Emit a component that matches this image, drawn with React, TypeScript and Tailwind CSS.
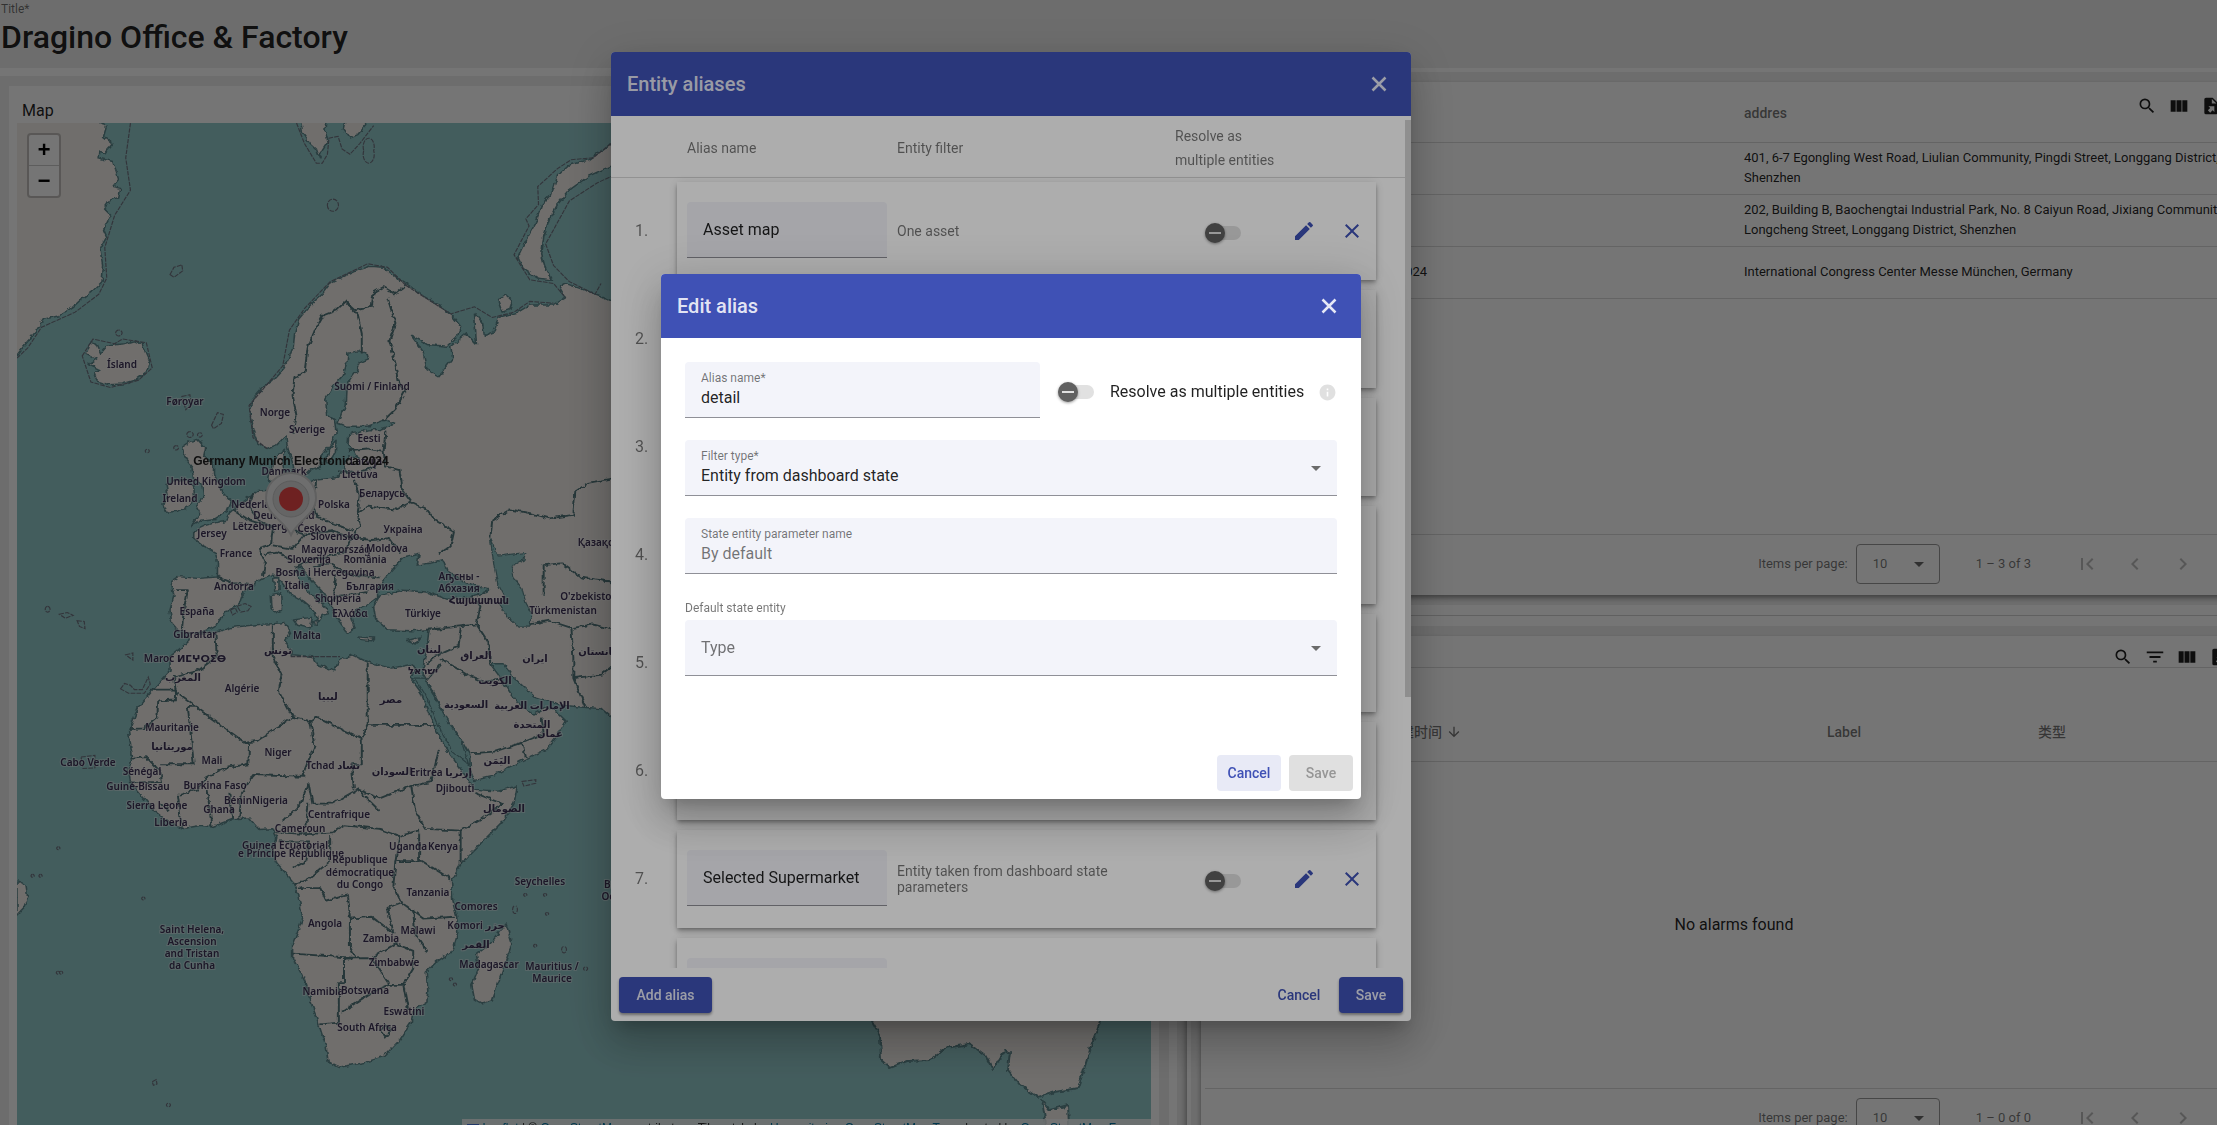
import React from "react";
import {
  MdArrowDownward,
  MdChevronLeft,
  MdChevronRight,
  MdClose,
  MdEdit,
  MdFilterList,
  MdFirstPage,
  MdInfo,
  MdLastPage,
  MdSearch,
} from "react-icons/md";

interface Alias {
  name: string;
  filter: string;
}

const aliases: Alias[] = [
  { name: "Asset map", filter: "One asset" },
  { name: "", filter: "" },
  { name: "", filter: "" },
  { name: "", filter: "" },
  { name: "", filter: "" },
  { name: "", filter: "" },
  {
    name: "Selected Supermarket",
    filter: "Entity taken from dashboard state parameters",
  },
  { name: "", filter: "" },
];

const places = [
  { name: "", address: "401, 6-7 Egongling West Road, Liulian Community, Pingdi Street, Longgang District, Shenzhen" },
  { name: "", address: "202, Building B, Baochengtai Industrial Park, No. 8 Caiyun Road, Jixiang Community, Longcheng Street, Longgang District, Shenzhen" },
  {
    name: "Germany Munich Electronica 2024",
    address: "International Congress Center Messe München, Germany",
  },
];

// Map units to pixels
const SX = 0.3954;
const SY = 0.3588;
const OX = 17;
const OY = 123;

const land = [
  // Greenland
  "M0 300 L260 300 255 345 270 350 262 380 285 400 262 430 250 420 248 440 285 450 300 500 285 520 305 525 300 550 275 560 262 580 280 600 262 640 270 660 255 690 262 740 258 785 235 810 205 835 185 855 150 880 110 890 90 925 60 965 43 990 0 1010 Z",
  // Iceland
  "M228 955 L245 960 255 985 270 965 295 960 315 958 340 950 360 960 368 985 378 1010 372 1035 340 1060 310 1070 275 1072 245 1062 238 1040 255 1030 225 1015 245 1000 218 985 Z",
  // Svalbard
  "M755 300 L765 370 785 400 800 415 808 440 815 420 830 395 822 360 830 300 Z",
  "M880 300 L868 360 885 385 905 375 925 350 920 300 Z",
  // Novaya Zemlya
  "M1600 385 L1540 405 1490 445 1440 460 1410 490 1395 540 1370 570 1355 620 1340 650 1325 680 1310 715 1325 750 1360 775 1395 780 1380 750 1370 710 1375 660 1390 610 1410 570 1440 530 1490 490 1530 470 1600 440 Z",
  // Great Britain
  "M480 1230 L500 1225 520 1250 515 1275 540 1290 540 1320 555 1350 565 1375 585 1400 575 1425 545 1445 510 1450 485 1465 505 1430 495 1410 515 1385 510 1350 490 1335 485 1300 470 1280 460 1245 Z",
  // Ireland
  "M445 1340 L470 1335 490 1355 492 1385 480 1410 450 1425 420 1428 412 1405 425 1380 420 1350 Z",
  // Europe and Asia
  "M1026 790 L1005 775 970 745 935 742 905 752 870 770 835 790 815 820 785 850 755 890 745 930 742 965 730 1000 715 1030 690 1060 660 1085 640 1110 632 1140 634 1170 640 1200 652 1235 675 1250 700 1240 722 1215 728 1250 740 1290 748 1330 765 1333 785 1310 810 1300 812 1270 835 1240 850 1205 846 1170 826 1155 824 1110 840 1080 868 1045 878 1010 880 985 905 978 928 985 932 1000 912 1010 905 1030 885 1060 875 1090 873 1130 862 1165 850 1178 875 1188 930 1188 975 1170 1000 1180 960 1197 930 1198 882 1212 880 1240 895 1255 905 1275 885 1270 872 1285 872 1310 856 1330 840 1333 800 1338 780 1348 745 1350 722 1338 715 1290 722 1252 700 1270 690 1290 680 1330 690 1365 650 1370 620 1395 600 1410 580 1430 570 1450 520 1465 490 1480 490 1500 520 1525 545 1540 550 1568 550 1608 500 1612 450 1607 432 1620 440 1660 430 1700 435 1740 445 1752 470 1762 490 1768 525 1755 550 1740 562 1720 580 1695 605 1685 612 1660 630 1635 668 1610 690 1600 710 1620 735 1655 768 1675 795 1700 803 1728 790 1738 800 1740 815 1715 832 1710 820 1690 790 1660 760 1625 745 1590 760 1578 790 1620 820 1655 838 1690 850 1720 880 1765 898 1750 890 1720 900 1700 925 1690 955 1665 955 1640 975 1610 1000 1578 1020 1555 1060 1545 1055 1575 1085 1570 1120 1560 1130 1590 1180 1625 1235 1640 1235 1650 1180 1665 1130 1670 1080 1650 1020 1645 960 1660 945 1690 950 1725 980 1755 1040 1758 1085 1755 1080 1800 1072 1850 1070 1880 1090 1920 1110 1960 1130 2010 1165 2060 1188 2105 1190 2150 1200 2175 1240 2165 1320 2120 1380 2090 1410 2050 1432 2010 1400 1975 1375 1975 1350 1990 1320 1970 1290 1930 1260 1880 1240 1850 1275 1850 1300 1890 1350 1940 1420 1965 1460 1970 1520 1975 1560 2010 1640 2040 L1640 850 1568 850 1520 825 1470 805 1430 790 1415 800 1430 830 1400 850 1340 850 1310 870 1260 885 1250 925 1225 935 1220 900 1200 870 1205 960 1180 930 1140 965 1145 1000 1110 1050 1080 1030 1070 980 1040 935 1080 960 1130 965 1155 940 1165 910 1140 875 1110 850 1070 825 1040 800 Z",
  // Africa
  "M545 1762 L590 1748 640 1742 690 1738 720 1735 735 1760 720 1785 740 1825 790 1830 800 1850 845 1870 858 1840 890 1825 930 1845 990 1862 1040 1852 1050 1860 1038 1890 1065 1930 1085 1990 1105 2040 1130 2090 1160 2135 1185 2175 1200 2200 1260 2205 1308 2190 1300 2240 1270 2290 1230 2335 1180 2390 1165 2410 1142 2455 1145 2510 1155 2555 1158 2600 1145 2650 1105 2680 1078 2710 1082 2760 1080 2790 1045 2815 1040 2850 1010 2900 970 2945 920 2962 855 2975 830 2960 825 2920 805 2850 785 2790 770 2730 740 2670 740 2630 765 2560 755 2490 740 2455 700 2405 690 2370 700 2335 690 2310 655 2312 630 2280 590 2282 535 2305 510 2300 460 2310 425 2290 390 2260 360 2220 330 2180 325 2150 335 2110 325 2040 350 1970 390 1920 430 1870 430 1830 475 1790 485 1765 Z",
  // Madagascar
  "M1280 2575 L1295 2630 1285 2660 1260 2740 1245 2790 1220 2798 1200 2785 1193 2745 1210 2700 1205 2660 1240 2630 Z",
  // Sardinia, Corsica, Sicily, Cyprus, Crete
  "M692 1612 L705 1610 706 1645 695 1650 Z M686 1660 L710 1655 712 1700 695 1708 688 1695 Z M742 1728 L790 1720 785 1750 750 1740 Z M1030 1785 L1065 1775 1050 1795 Z M905 1775 L945 1778 940 1786 910 1782 Z",
  // Zemlya and Gotland
  "M1258 835 L1278 820 1295 838 1290 862 1270 870 Z M825 1290 L832 1250 850 1230 848 1260 832 1290 Z",
  // South America tip
  "M43 2455 L65 2465 70 2500 60 2530 43 2550 Z",
];

const water = [
  // Caspian Sea
  "M1240 1500 L1260 1550 1290 1545 1330 1540 1325 1560 1295 1580 1300 1610 1320 1640 1330 1680 1345 1710 1340 1745 1310 1745 1280 1715 1265 1690 1275 1660 1258 1625 1250 1580 Z",
  // Red Sea
  "M1038 1890 L1055 1900 1075 1935 1095 1985 1115 2035 1145 2095 1185 2130 1165 2060 1130 2005 1100 1945 1070 1890 Z",
];

const borders = [
  "M742 1210 L750 1160 740 1100 745 1050 770 1040 778 970 800 910 815 880 850 865 875 840 900 865 940 855 945 815 970 800 1000 820 1026 795",
  "M875 840 L905 880 915 930 915 985",
  "M980 830 L1000 900 985 950 1000 1010 1005 1060 1025 1090 1000 1140 970 1172",
  "M880 1255 L930 1250 970 1260 975 1200 M855 1310 L900 1320 950 1300 M970 1255 L975 1300 1010 1310 1020 1370 1040 1400 1000 1420 930 1412 905 1430",
  "M895 1340 L910 1380 905 1430 910 1465 890 1500 M800 1340 L790 1400 800 1440 845 1460 895 1480",
  "M1040 1400 L1080 1420 1100 1450 1148 1480 1140 1520 1110 1545 M895 1500 L940 1505 985 1500 1010 1540",
  "M640 1375 L630 1410 655 1450 690 1470 685 1520 655 1530 670 1568 665 1605 M590 1420 L630 1450 690 1470",
  "M690 1520 L740 1530 770 1490 720 1470 M770 1490 L840 1480 890 1500 870 1540 790 1560 745 1580",
  "M670 1545 L700 1540 740 1560 M790 1580 L830 1570 880 1600 960 1610 M830 1680 L860 1660 930 1650 M850 1600 L845 1660",
  "M550 1608 L590 1625 632 1630 M445 1645 L475 1645 465 1700 460 1755",
  "M1080 1755 L1130 1750 1205 1740 1215 1690 1195 1660 M1205 1740 L1235 1790 1240 1850 M1165 1750 L1160 1800 1100 1830 1080 1850",
  "M1115 1850 L1080 1895 M1115 1835 L1180 1880 1225 1900 1260 1895 M1190 2100 L1250 2095 1320 2070 1375 2045 1370 2000 M1320 2070 L1330 2110",
  "M1340 1740 L1390 1730 1445 1750 1450 1830 1450 1890 1480 1970 M1450 1890 L1520 1880 1568 1840 M1450 1750 L1500 1740 1568 1760",
  "M1375 1660 L1375 1575 1420 1570 1470 1610 1540 1620 1568 1650 M1240 1500 L1245 1450 1290 1420 1340 1430 1390 1445 1450 1435 1455 1370 1490 1345 1568 1330",
  "M545 1765 L548 1830 500 1870 440 1885 445 1930 495 1970 620 2070 650 2065 740 1998 705 1925 712 1880 690 1830 690 1740",
  "M380 1922 L445 1922 445 1952 400 1955 398 2000 365 2030 325 2032 M475 1970 L490 2130 405 2130 M475 1970 L495 1970",
  "M620 2070 L630 2075 628 2130 570 2140 520 2170 500 2200 455 2215 M330 2115 L370 2110 405 2150 410 2180 330 2180",
  "M740 1998 L785 2010 800 1998 915 2060 915 2130 890 2130 895 2200 M785 2010 L795 2080 765 2160 770 2165 640 2160 612 2210 605 2280",
  "M930 1850 L930 2020 1105 2020 M930 2020 L915 2055 M780 2180 L760 2240 715 2290 M780 2180 L790 2240 840 2240 905 2200 960 2260 M780 2240 L775 2300",
  "M905 2200 L960 2225 1040 2190 1090 2180 1110 2090 M1040 2190 L1050 2260 1075 2310 1165 2315 1215 2285 1270 2240 1200 2210",
  "M525 2200 L535 2305 M580 2210 L590 2282 M450 2215 L460 2310 M405 2240 L430 2260",
  "M700 2320 L780 2325 840 2320 870 2300 960 2310 1010 2330 1060 2315 M835 2330 L835 2400 780 2450 745 2465 M705 2345 L780 2345 775 2400 740 2420",
  "M1010 2330 L1000 2400 1060 2400 1060 2320 M1165 2315 L1165 2410 M1060 2395 L1140 2450 M1000 2400 L995 2470 1015 2515 1070 2560 1150 2555",
  "M755 2475 L810 2475 825 2510 880 2495 885 2560 M885 2560 L940 2555 995 2600 980 2530 1015 2515 M885 2560 L885 2640 900 2670 740 2658",
  "M870 2672 L870 2740 857 2740 857 2850 810 2855 M870 2672 L940 2670 985 2745 950 2760 900 2795 865 2820 M985 2745 L1020 2745 1045 2700 1045 2650 1000 2630 940 2670 M1020 2745 L1032 2815",
  "M1045 2535 L1050 2600 1080 2650 1075 2655 M960 2870 L975 2892 992 2870 975 2860 Z",
];

// Twelve mile zones drawn off the coast
const zones = [
  "M330 343 L318 440 330 530 290 600 265 690 270 775 250 820 190 870 105 912 70 970 43 998",
  "M750 343 L770 400 800 455 815 455 828 430 832 385 855 380 865 415 885 430 910 400 945 350",
  "M920 420 a14 24 0 1 0 25 0 a14 24 0 1 0 -25 0 M828 572 a14 17 0 1 0 28 0 a14 17 0 1 0 -28 0 M430 765 L440 745 460 738 462 755 440 773 Z",
  "M1568 380 L1500 440 1445 445 1410 470 1360 520 1362 570 1330 610 1338 630 1300 710 1340 780 1400 790 1430 830 M1568 480 L1510 510 1440 560 1380 680 1400 740 1440 785 1505 820 1520 790",
  "M208 992 L235 945 290 958 310 945 370 955 385 1025 350 1060 280 1080 230 1065 Z",
  "M1026 795 L980 745 930 735 835 785 770 860 732 920 715 1020 630 1130 640 1220 675 1250 M1026 795 L1140 875 1200 855 1245 885 1300 870 1340 840 1400 845",
  "M120 1690 a6 8 0 1 0 1 0 M150 1712 l20 -5 15 8 -20 8 Z M195 1730 l18 2 2 20 -14 -6 Z M318 1825 l18 -5 0 20 Z M305 1920 l10 -15 15 5 10 12 20 0 15 -35 5 20 -15 25 -40 0 Z",
  "M205 2110 l35 -5 0 35 -30 2 Z M1320 2178 l35 -5 0 10 -30 8 Z M1300 2525 a6 11 0 1 0 5 0 M1425 2638 a6 9 0 1 0 3 0 M1480 2695 a5 5 0 1 0 2 0 M385 3015 l10 -6 2 12 -9 4 Z M425 3075 a5 5 0 1 0 2 0",
  "M362 2500 a4 4 0 1 0 1 0 M147 2360 a4 4 0 1 0 1 0 M82 2437 a4 4 0 1 0 1 0 M102 2437 a4 4 0 1 0 1 0 M146 2707 a4 4 0 1 0 1 0 M154 2707 a4 4 0 1 0 1 0 M1140 2725 a4 4 0 1 0 1 0 M1150 2740 a4 4 0 1 0 1 0 M1353 2632 a4 4 0 1 0 1 0 M1383 2543 a4 4 0 1 0 1 0 M1328 2490 a4 4 0 1 0 1 0 M1378 2490 a4 4 0 1 0 1 0",
  "M535 1185 L550 1150 565 1155 560 1180 540 1195 Z M460 1105 L480 1100 485 1125 470 1142 Z M300 920 a8 8 0 1 0 1 0 M480 1203 a8 8 0 1 0 1 0 M505 1206 a6 6 0 1 0 1 0 M445 1242 a6 6 0 1 0 1 0 M372 1252 a5 5 0 1 0 1 0",
  "M583 1700 l12 -6 5 12 -12 8 Z M600 1690 l20 -8 15 8 -8 12 -18 4 Z M735 1830 L780 1830 860 1830",
];

const mapLabels: [string, number, number][] = [
  ["Ísland", 308, 1014],
  ["Føroyar", 468, 1117],
  ["Norge", 695, 1147],
  ["Suomi / Finland", 941, 1076],
  ["Sverige", 777, 1195],
  ["Eesti", 934, 1222],
  ["Latvija", 925, 1284],
  ["Danmark", 718, 1312],
  ["Lietuva", 910, 1321],
  ["United Kingdom", 521, 1340],
  ["Ireland", 454, 1389],
  ["Беларусь", 966, 1375],
  ["Nederland", 650, 1405],
  ["Polska", 844, 1405],
  ["Deutschland", 718, 1434],
  ["Lëtzebuerg", 657, 1467],
  ["Česko", 789, 1471],
  ["Україна", 1019, 1475],
  ["Slovensko", 848, 1493],
  ["Jersey", 537, 1485],
  ["Қазақстан", 1527, 1511],
  ["Magyarország", 849, 1530],
  ["Moldova", 980, 1528],
  ["France", 596, 1542],
  ["Slovenija", 781, 1557],
  ["România", 923, 1557],
  ["Bosna i Hercegovina", 822, 1595],
  ["Аҧсны -", 1161, 1604],
  ["Абхазия", 1161, 1638],
  ["Andorra", 591, 1634],
  ["Italia", 751, 1631],
  ["България", 936, 1633],
  ["Shqipëria", 856, 1667],
  ["Հայաստան", 1212, 1672],
  ["O'zbekiston", 1490, 1660],
  ["España", 499, 1702],
  ["Ελλάδα", 886, 1709],
  ["Türkiye", 1071, 1709],
  ["Türkmenistan", 1423, 1700],
  ["Gibraltar", 492, 1766],
  ["Malta", 776, 1769],
  ["تونس", 704, 1812],
  ["لبنان", 1084, 1810],
  ["العراق", 1205, 1826],
  ["ایران", 1353, 1833],
  ["افغانستان", 1525, 1813],
  ["Maroc ⵍⵎⵖⵔⵉⴱ", 468, 1833],
  ["المغرب", 463, 1887],
  ["ישראל", 1071, 1866],
  ["الكويت", 1253, 1896],
  ["Algérie", 611, 1918],
  ["ليبيا", 830, 1940],
  ["مصر", 990, 1949],
  ["السعودية", 1178, 1962],
  ["الإمارات العربية", 1346, 1966],
  ["المتحدة", 1346, 2019],
  ["عمان", 1390, 2042],
  ["Mauritanie", 435, 2025],
  ["موريتانيا", 436, 2079],
  ["Niger", 703, 2095],
  ["Mali", 536, 2117],
  ["اليَمَن", 1258, 2118],
  ["Cabo Verde", 223, 2124],
  ["Tchad تشاد", 843, 2131],
  ["السودان", 992, 2148],
  ["Eritrea إرتريا", 1116, 2151],
  ["Sénégal", 360, 2149],
  ["Guiné-Bissau", 349, 2192],
  ["Burkina Faso", 544, 2188],
  ["Djibouti", 1150, 2195],
  ["Bénin", 601, 2229],
  ["Nigeria", 684, 2229],
  ["Sierra Leone", 398, 2244],
  ["Ghana", 553, 2254],
  ["Centrafrique", 857, 2270],
  ["الصومال", 1275, 2251],
  ["Liberia", 433, 2290],
  ["Cameroun", 758, 2308],
  ["Guinea Ecuatorial", 720, 2356],
  ["e Príncipe République", 735, 2378],
  ["Uganda", 1032, 2358],
  ["Kenya", 1121, 2358],
  ["République", 911, 2395],
  ["démocratique", 911, 2429],
  ["du Congo", 911, 2463],
  ["Tanzania", 1083, 2485],
  ["Seychelles", 1366, 2456],
  ["Comores", 1205, 2524],
  ["British", 1568, 2464],
  ["Ocean", 1560, 2498],
  ["Angola", 821, 2572],
  ["Komori جزر", 1205, 2577],
  ["القمر", 1205, 2630],
  ["Saint Helena,", 486, 2588],
  ["Ascension", 486, 2622],
  ["and Tristan", 486, 2656],
  ["da Cunha", 486, 2690],
  ["Malawi", 1057, 2593],
  ["Zambia", 964, 2615],
  ["Zimbabwe", 996, 2680],
  ["Madagascar", 1237, 2688],
  ["Mauritius /", 1397, 2693],
  ["Maurice", 1397, 2727],
  ["Namibia", 817, 2761],
  ["Botswana", 922, 2760],
  ["Eswatini", 1021, 2819],
  ["South Africa", 928, 2861],
];

const WorldMap: React.FC = () => (
  <svg className="block w-full h-full" role="img" aria-label="World map">
    <defs>
      <filter id="coast" x="0" y="0" width="100%" height="100%">
        <feTurbulence type="fractalNoise" baseFrequency="0.18" numOctaves={2} seed={4} />
        <feDisplacementMap in="SourceGraphic" scale={5} xChannelSelector="R" yChannelSelector="G" />
      </filter>
    </defs>
    <rect width="100%" height="100%" fill="#94cacb" />
    <g filter="url(#coast)" strokeLinejoin="round">
      <g transform={`translate(${-OX} ${-OY}) scale(${SX} ${SY})`}>
        {land.map((d) => (
          <path key={d} d={d} fill="#f3efeb" stroke="#5d888d" strokeWidth={4} />
        ))}
        {water.map((d) => (
          <path key={d} d={d} fill="#94cacb" stroke="#5d888d" strokeWidth={3} />
        ))}
        {borders.map((d) => (
          <path key={d} d={d} fill="none" stroke="#55797e" strokeWidth={5} />
        ))}
      </g>
      {/* Australia and Tasmania */}
      <g transform={`translate(${-OX} ${-OY})`} fill="#f3efeb" stroke="#5f898e" strokeWidth={2}>
        <path d="M860 990 L872 1021 880 1035 881 1060 890 1068 907 1061 930 1060 945 1048 970 1044 985 1055 993 1070 1005 1050 1010 1052 1008 1070 1020 1085 1038 1097 1055 1092 1078 1088 1090 1050 1100 1021 1110 990 Z" />
        <path d="M1042 1100 L1050 1110 1068 1105 1070 1150 1050 1150 Z" />
      </g>
    </g>
    <g
      transform={`translate(${-OX} ${-OY}) scale(${SX} ${SY})`}
      fill="none"
      stroke="#6f7480"
      strokeWidth={3}
      strokeDasharray="12 3"
    >
      {zones.map((d) => (
        <path key={d} d={d} />
      ))}
    </g>
    <g
      className="font-['Noto_Sans','DejaVu_Sans',sans-serif] text-[10px] font-semibold"
      fill="#3f3358"
      stroke="#ffffff"
      strokeOpacity={0.4}
      strokeWidth={2}
      paintOrder="stroke"
      textAnchor="middle"
    >
      {mapLabels.map(([text, x, y]) => (
        <text key={`${text}${y}`} x={Math.round(x * SX - OX)} y={Math.round(y * SY - OY + 4)}>
          {text}
        </text>
      ))}
    </g>
    {/* Device marker */}
    <g transform="translate(274 376)">
      <path
        d="M0 36 C-6 22 -25 16 -25 -1 A25 25 0 0 1 25 -1 C25 16 6 22 0 36 Z"
        fill="#f0f0f0"
        stroke="#d2d2d2"
        strokeWidth={2}
      />
      <circle r={18} fill="#dcdcdc" stroke="#c8c8c8" strokeWidth={1} />
      <circle r={12} fill="#f04a4a" />
    </g>
    <text
      x={274}
      y={342}
      textAnchor="middle"
      fill="#222222"
      className="font-['Liberation_Sans',sans-serif] text-xs font-bold"
    >
      Germany Munich Electronica 2024
    </text>
  </svg>
);

const ColumnsIcon: React.FC = () => (
  <svg viewBox="0 0 24 24" className="w-5 h-5" fill="currentColor">
    <path d="M2 5h6v14H2zM9 5h6v14H9zM16 5h6v14h-6z" />
  </svg>
);

const FileExportIcon: React.FC = () => (
  <svg viewBox="0 0 24 24" className="w-5 h-5" fill="currentColor">
    <path d="M6 2C4.89 2 4 2.9 4 4V20A2 2 0 0 0 6 22H18A2 2 0 0 0 20 20V8L14 2H6M13 3.5L18.5 9H13V3.5M8.93 12.22H16V19.29L13.88 17.17L11.05 20L8.22 17.17L11.05 14.35L8.93 12.22Z" />
  </svg>
);

const BoldCloseIcon: React.FC = () => (
  <svg viewBox="0 0 24 24" className="w-6 h-6" stroke="currentColor" strokeWidth={2.5}>
    <path d="M5.5 5.5L18.5 18.5M18.5 5.5L5.5 18.5" />
  </svg>
);

const Caret: React.FC = () => (
  <svg viewBox="0 0 10 5" className="w-[10px] h-[5px]" fill="#6b6b6b">
    <path d="M0 0h10L5 5z" />
  </svg>
);

const Toggle: React.FC<{ label: string; hideLabel?: boolean }> = ({ label, hideLabel }) => (
  <label className="flex items-center gap-4 pt-1 text-base leading-5 text-black/87">
    <input type="checkbox" className="sr-only" />
    <span className="flex items-center w-9 h-[14px] rounded-full bg-[#e1e1e1]">
      <span className="flex items-center justify-center w-5 h-5 rounded-full bg-[#616161] shadow-[0_1px_3px_rgba(0,0,0,0.4)]">
        <span className="w-3 h-[2px] bg-[#e1e1e1]" />
      </span>
    </span>
    <span className={hideLabel ? "sr-only" : ""}>{label}</span>
  </label>
);

const IconButton: React.FC<{
  label: string;
  className?: string;
  children?: React.ReactNode;
}> = ({ label, className = "", children }) => (
  <button aria-label={label} className={`flex items-center justify-center shrink-0 ${className}`}>
    {children}
  </button>
);

const DialogHeader: React.FC<{ title: string }> = ({ title }) => (
  <header className="flex items-center justify-between h-16 pl-4 pr-2 shrink-0 bg-[#3f51b5] text-white/87">
    <h2 className="text-xl font-medium">{title}</h2>
    <IconButton label="Close" className="w-12 h-12">
      <BoldCloseIcon />
    </IconButton>
  </header>
);

const Paginator: React.FC<{ id: string; range: string }> = ({ id, range }) => (
  <footer className="flex items-center justify-end h-[61px] pr-2 pb-[2px] shrink-0 border-t border-[#dadada] text-[13px] text-black/54">
    <label htmlFor={id}>Items per page:</label>
    <div className="relative flex items-center ml-2">
      <select
        id={id}
        className="appearance-none w-[84px] h-10 pl-4 rounded border border-[#9a9a9a] text-[13px] text-black/54"
      >
        <option>10</option>
      </select>
      <span className="absolute right-4 pointer-events-none">
        <Caret />
      </span>
    </div>
    <span className="ml-9 mr-8">{range}</span>
    <IconButton label="First page" className="w-12 h-12 text-black/26">
      <MdFirstPage size={24} />
    </IconButton>
    <IconButton label="Previous page" className="w-12 h-12 text-black/26">
      <MdChevronLeft size={24} />
    </IconButton>
    <IconButton label="Next page" className="w-12 h-12 text-black/26">
      <MdChevronRight size={24} />
    </IconButton>
    <IconButton label="Last page" className="w-12 h-12 text-black/26">
      <MdLastPage size={24} />
    </IconButton>
  </footer>
);

const MapWidget: React.FC = () => (
  <section className="flex flex-col w-[1177px] shrink-0 mb-3 border-t-8 border-r-8 border-white bg-[#eeeeee] pt-[10px] pr-[10px] pl-[9px]">
    <div className="flex flex-col flex-1 min-h-0 bg-white px-2 pt-[13px]">
      <h2 className="pl-[5px] text-base leading-6 h-6 text-black/87">Map</h2>
      <div className="relative flex-1 min-h-0">
        <WorldMap />
        <div className="absolute top-[10px] left-[10px] flex flex-col w-[34px] rounded border-2 border-black/20 bg-white bg-clip-padding text-black">
          <button className="h-[31px] pt-1 border-b border-[#cccccc] text-[22px] leading-[26px] font-bold font-['Liberation_Mono',monospace]">
            +
          </button>
          <button className="h-[30px] pt-1 text-[22px] leading-[26px] font-bold font-['Liberation_Mono',monospace]">
            −
          </button>
        </div>
        <div className="absolute right-0 bottom-0 px-[5px] bg-white/80 text-xs leading-[18px] text-[#333333] whitespace-nowrap font-['Liberation_Sans',sans-serif]">
          <span className="inline-block w-3 h-2 mr-1 bg-[#4c7be1] border-b-4 border-[#ffd500]" />
          <a href="#leaflet" className="text-[#0078a8]">Leaflet</a> | ©{" "}
          <a href="#osm" className="text-[#0078a8]">OpenStreetMap</a> contributors, Tiles style by{" "}
          <a href="#hot" className="text-[#0078a8]">Humanitarian OpenStreetMap Team</a> hosted by{" "}
          <a href="#osmfr" className="text-[#0078a8]">OpenStreetMap France</a>
        </div>
      </div>
    </div>
  </section>
);

const PlacesWidget: React.FC = () => (
  <section className="relative flex flex-col flex-1 min-h-0 px-1 bg-white shadow-[0_3px_5px_rgba(0,0,0,0.4)]">
    <div className="absolute top-2 right-2 flex text-black/87">
      <IconButton label="Search" className="w-8 h-8">
        <MdSearch size={20} />
      </IconButton>
      <IconButton label="Columns to display" className="w-8 h-8">
        <ColumnsIcon />
      </IconButton>
      <IconButton label="Export" className="w-8 h-8">
        <FileExportIcon />
      </IconButton>
      <IconButton label="Fullscreen" className="w-8 h-8" />
    </div>
    <div className="flex-1">
      <table className="w-full table-fixed text-left">
        <thead>
          <tr className="h-[60px] border-b border-[#dadada] text-sm text-black/54">
            <th className="pl-6 pt-[2px] font-medium">Name</th>
            <th className="pl-[10px] pt-[2px] font-medium">addres</th>
          </tr>
        </thead>
        <tbody>
          {places.map((place) => (
            <tr key={place.address} className="h-[52px] border-b border-[#dadada] text-[13px] leading-5 text-black/87">
              <td className="pl-6">{place.name}</td>
              <td className="pl-[10px]">{place.address}</td>
            </tr>
          ))}
        </tbody>
      </table>
    </div>
    <Paginator id="places-page-size" range="1 – 3 of 3" />
  </section>
);

const AlarmsWidget: React.FC = () => (
  <section className="flex flex-col flex-1 min-h-0 px-1 bg-white shadow-[0_3px_5px_rgba(0,0,0,0.4)]">
    <div className="flex justify-end items-center h-8 -mr-1 shrink-0 pt-[10px] border-b border-[#dadada] text-black/87">
      <IconButton label="Search alarms" className="w-8 h-5">
        <MdSearch size={20} />
      </IconButton>
      <IconButton label="Filter alarms" className="w-8 h-5">
        <MdFilterList size={22} />
      </IconButton>
      <IconButton label="Alarm columns" className="w-8 h-5">
        <ColumnsIcon />
      </IconButton>
      <IconButton label="Export alarms" className="w-8 h-5">
        <FileExportIcon />
      </IconButton>
      <IconButton label="Fullscreen alarms" className="w-8 h-5" />
    </div>
    <table className="w-full table-fixed text-left">
      <thead>
        <tr className="h-[93px] border-b border-[#dadada] text-sm text-black/54">
          <th className="w-[181px]" />
          <th className="w-[441px] pt-9 font-medium">
            <span className="flex items-center gap-1">
              创建时间
              <MdArrowDownward size={16} />
            </span>
          </th>
          <th className="w-[211px] pt-9 font-medium">Label</th>
          <th className="pt-9 font-medium">类型</th>
        </tr>
      </thead>
    </table>
    <div className="flex flex-1 items-center justify-center text-base text-black/87">
      No alarms found
    </div>
    <Paginator id="alarms-page-size" range="1 – 0 of 0" />
  </section>
);

const Dashboard: React.FC = () => (
  <div className="flex flex-col h-[calc(100vh+24px)] bg-[#eeeeee]">
    <header className="h-[68px] shrink-0 pl-px">
      <label htmlFor="dashboard-title" className="block pt-px text-xs leading-4 text-black/54">
        Title*
      </label>
      <input
        id="dashboard-title"
        defaultValue="Dragino Office & Factory"
        className="block w-[600px] h-10 text-[32px] leading-10 font-medium text-black/87"
      />
    </header>
    <main className="flex flex-1 min-h-0">
      <MapWidget />
      <div className="flex flex-col flex-1 min-w-0 ml-[10px] -mr-[50px] border-t-4 border-l-4 border-white shadow-[-3px_6px_6px_-2px_rgba(0,0,0,0.4)]">
        <div className="flex flex-col flex-[513] min-h-0 bg-[#eeeeee] pl-[10px] py-[10px] border-b-[10px] border-white">
          <PlacesWidget />
        </div>
        <div className="flex flex-col flex-[523] min-h-0 pt-[10px] bg-white border-t border-[#d2d2d2]">
          <div className="flex flex-col flex-1 min-h-0 bg-[#eeeeee] pl-[10px] pt-[10px]">
            <AlarmsWidget />
          </div>
        </div>
      </div>
    </main>
  </div>
);

const dialogShadow =
  "shadow-[0_11px_15px_-7px_rgba(0,0,0,0.2),0_24px_38px_3px_rgba(0,0,0,0.14),0_9px_46px_8px_rgba(0,0,0,0.12)]";

const EntityAliasesDialog: React.FC = () => (
  <div className="absolute inset-0 flex items-center justify-center pr-[195px] pb-[52px] bg-black/32">
    <div
      role="dialog"
      aria-label="Entity aliases"
      className={`flex flex-col w-[800px] h-[calc(100vh-156px)] rounded overflow-hidden bg-white ${dialogShadow}`}
    >
      <DialogHeader title="Entity aliases" />
      <div className="flex flex-1 min-h-0 pt-1">
        <div className="flex-1 min-w-0 overflow-hidden">
          <div className="flex items-center h-[58px] pl-[76px] pb-[2px] border-b border-[#d8d8d8] text-sm text-black/54">
            <span className="w-[210px]">Alias name</span>
            <span className="w-[278px]">Entity filter</span>
            <span className="w-[120px] leading-6">Resolve as multiple entities</span>
          </div>
          <div className="flex flex-col gap-[10px] pt-1">
            {aliases.map((alias, index) => (
              <div key={index} className="flex items-center pl-6 pr-[29px]">
                <span className="w-[42px] text-base text-black/54">{index + 1}.</span>
                <div className="flex flex-1 items-center h-[98px] pl-[10px] pr-1 bg-white shadow-[0_2px_4px_-1px_rgba(0,0,0,0.3),0_4px_5px_rgba(0,0,0,0.16),0_1px_10px_rgba(0,0,0,0.14)]">
                  <input
                    aria-label={`Alias name ${index + 1}`}
                    defaultValue={alias.name}
                    className="w-[200px] h-14 px-4 mb-[2px] shrink-0 rounded-t bg-[#f3f4fa] border-b border-[#8f9097] text-base text-black/87"
                  />
                  <span className="w-[278px] pl-[10px] pr-6 text-sm leading-4 text-black/54">
                    {alias.filter}
                  </span>
                  <div className="flex flex-1 items-center pl-10">
                    <Toggle label="Resolve as multiple entities" hideLabel />
                  </div>
                  <div className="flex gap-2 text-[#3f51b5]">
                    <IconButton label="Edit alias" className="w-10 h-10">
                      <MdEdit size={24} />
                    </IconButton>
                    <IconButton label="Remove alias" className="w-10 h-10">
                      <MdClose size={24} />
                    </IconButton>
                  </div>
                </div>
              </div>
            ))}
          </div>
        </div>
        <div className="w-[6px]">
          <div className="h-[68%] bg-[#d3d3d3]" />
        </div>
      </div>
      <footer className="flex items-center gap-2 h-[53px] px-2 shrink-0 text-sm font-medium">
        <button className="w-[93px] h-9 mr-auto rounded bg-[#3f51b5] text-white/87 shadow-[0_2px_3px_rgba(0,0,0,0.4)]">
          Add alias
        </button>
        <button className="w-16 h-9 rounded text-[#3f51b5]">Cancel</button>
        <button className="w-16 h-9 rounded bg-[#3f51b5] text-white/87 shadow-[0_2px_3px_rgba(0,0,0,0.4)]">
          Save
        </button>
      </footer>
    </div>
  </div>
);

const Field: React.FC<{
  id: string;
  label: string;
  className?: string;
  children: React.ReactNode;
}> = ({ id, label, className = "", children }) => (
  <div
    className={`relative flex flex-col h-14 pt-2 rounded-t bg-[#f3f4fa] border-b border-[#8f9097] ${className}`}
  >
    <label htmlFor={id} className="px-4 text-xs leading-4 text-black/54">
      {label}
    </label>
    {children}
  </div>
);

const EditAliasDialog: React.FC = () => (
  <div className="absolute inset-0 flex items-center justify-center pr-[195px] pb-[52px] bg-black/32">
    <div
      role="dialog"
      aria-label="Edit alias"
      className={`flex flex-col w-[700px] rounded overflow-hidden bg-white ${dialogShadow}`}
    >
      <DialogHeader title="Edit alias" />
      <div className="flex flex-col px-6 pt-6">
        <div className="flex items-center mb-[22px]">
          <Field id="alias-name" label="Alias name*" className="w-[355px] mr-[18px]">
            <input
              id="alias-name"
              defaultValue="detail"
              className="w-full px-4 text-base leading-6 text-black/87"
            />
          </Field>
          <Toggle label="Resolve as multiple entities" />
          <MdInfo size={19} className="ml-auto mt-1 text-[#e0e0e0]" />
        </div>
        <Field id="filter-type" label="Filter type*" className="mb-[22px]">
          <select
            id="filter-type"
            className="appearance-none w-full px-4 text-base leading-6 text-black/87"
          >
            <option>Entity from dashboard state</option>
          </select>
          <span className="absolute right-4 top-[26px] pointer-events-none">
            <Caret />
          </span>
        </Field>
        <Field id="state-param" label="State entity parameter name" className="mb-[26px]">
          <input
            id="state-param"
            placeholder="By default"
            className="w-full px-4 text-base leading-6 placeholder:text-black/54"
          />
        </Field>
        <label htmlFor="default-entity" className="mb-1 text-xs leading-4 text-black/54">
          Default state entity
        </label>
        <div className="relative flex items-center">
          <select
            id="default-entity"
            className="appearance-none w-full h-14 px-4 rounded-t bg-[#f3f4fa] border-b border-[#8f9097] text-base text-black/54"
          >
            <option>Type</option>
          </select>
          <span className="absolute right-4 pointer-events-none">
            <Caret />
          </span>
        </div>
      </div>
      <footer className="flex justify-end gap-2 mt-[71px] p-2 text-sm font-medium">
        <button className="w-16 h-9 rounded bg-[#e8eaf6] text-[#3f51b5]">Cancel</button>
        <button disabled className="w-16 h-9 rounded bg-[#e0e0e0] text-[#969696]">
          Save
        </button>
      </footer>
    </div>
  </div>
);

const App: React.FC = () => (
  <div className="relative h-screen overflow-hidden font-['Roboto','Noto_Sans_CJK_SC',sans-serif]">
    <Dashboard />
    <EntityAliasesDialog />
    <EditAliasDialog />
  </div>
);

export default App;
